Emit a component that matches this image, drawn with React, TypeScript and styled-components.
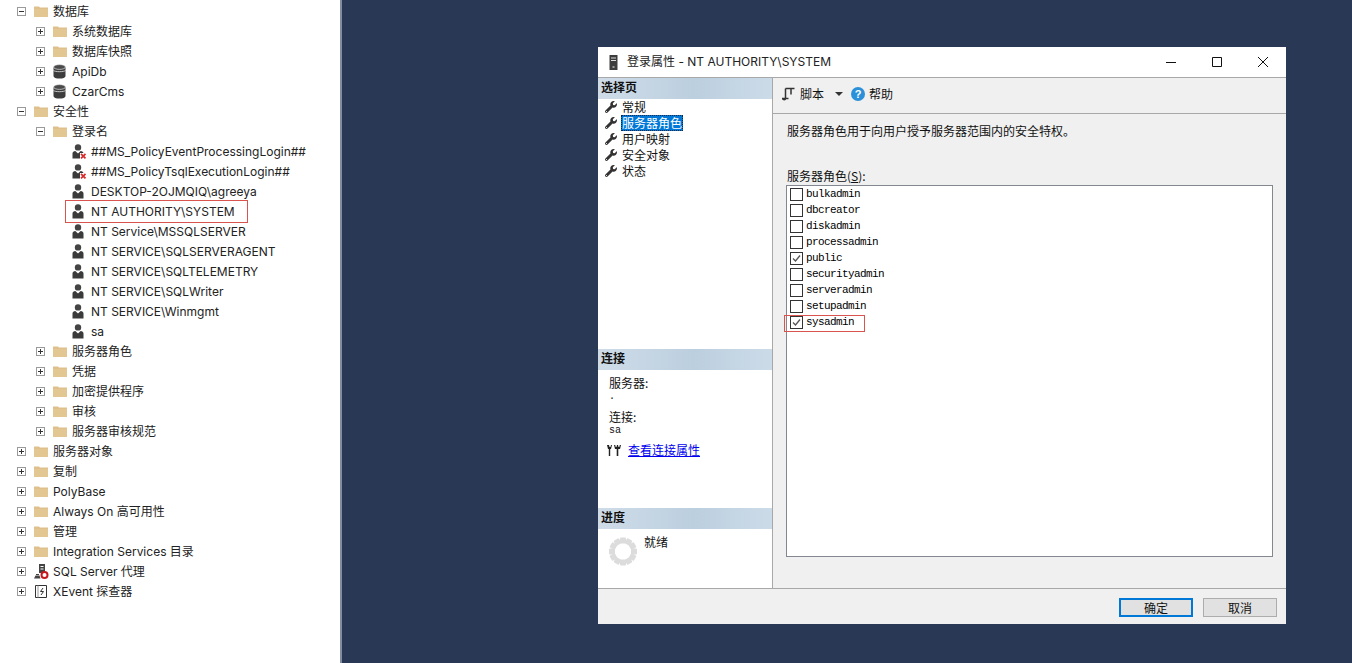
import React from "react";
import styled, { createGlobalStyle } from "styled-components";
import { FaWrench } from "react-icons/fa";

const UI_FONT = `Inter, "Noto Sans CJK SC", sans-serif`;
const DLG_FONT = `"Noto Sans CJK SC", "Liberation Sans", sans-serif`;
const MONO_FONT = `"Liberation Mono", "DejaVu Sans Mono", monospace`;

type Kind = "folder" | "db" | "user" | "userx" | "agent" | "xevent";
type Node = { level: number; text: string; kind: Kind; exp?: "+" | "-"; marked?: boolean };

const nodes: Node[] = [
  { level: 0, text: "数据库", kind: "folder", exp: "-" },
  { level: 1, text: "系统数据库", kind: "folder", exp: "+" },
  { level: 1, text: "数据库快照", kind: "folder", exp: "+" },
  { level: 1, text: "ApiDb", kind: "db", exp: "+" },
  { level: 1, text: "CzarCms", kind: "db", exp: "+" },
  { level: 0, text: "安全性", kind: "folder", exp: "-" },
  { level: 1, text: "登录名", kind: "folder", exp: "-" },
  { level: 2, text: "##MS_PolicyEventProcessingLogin##", kind: "userx" },
  { level: 2, text: "##MS_PolicyTsqlExecutionLogin##", kind: "userx" },
  { level: 2, text: "DESKTOP-2OJMQIQ\\agreeya", kind: "user" },
  { level: 2, text: "NT AUTHORITY\\SYSTEM", kind: "user", marked: true },
  { level: 2, text: "NT Service\\MSSQLSERVER", kind: "user" },
  { level: 2, text: "NT SERVICE\\SQLSERVERAGENT", kind: "user" },
  { level: 2, text: "NT SERVICE\\SQLTELEMETRY", kind: "user" },
  { level: 2, text: "NT SERVICE\\SQLWriter", kind: "user" },
  { level: 2, text: "NT SERVICE\\Winmgmt", kind: "user" },
  { level: 2, text: "sa", kind: "user" },
  { level: 1, text: "服务器角色", kind: "folder", exp: "+" },
  { level: 1, text: "凭据", kind: "folder", exp: "+" },
  { level: 1, text: "加密提供程序", kind: "folder", exp: "+" },
  { level: 1, text: "审核", kind: "folder", exp: "+" },
  { level: 1, text: "服务器审核规范", kind: "folder", exp: "+" },
  { level: 0, text: "服务器对象", kind: "folder", exp: "+" },
  { level: 0, text: "复制", kind: "folder", exp: "+" },
  { level: 0, text: "PolyBase", kind: "folder", exp: "+" },
  { level: 0, text: "Always On 高可用性", kind: "folder", exp: "+" },
  { level: 0, text: "管理", kind: "folder", exp: "+" },
  { level: 0, text: "Integration Services 目录", kind: "folder", exp: "+" },
  { level: 0, text: "SQL Server 代理", kind: "agent", exp: "+" },
  { level: 0, text: "XEvent 探查器", kind: "xevent", exp: "+" },
];

const pages = ["常规", "服务器角色", "用户映射", "安全对象", "状态"];

const roles = [
  { name: "bulkadmin" },
  { name: "dbcreator" },
  { name: "diskadmin" },
  { name: "processadmin" },
  { name: "public", on: true },
  { name: "securityadmin" },
  { name: "serveradmin" },
  { name: "setupadmin" },
  { name: "sysadmin", on: true, marked: true },
];

function TreeIcon({ kind }: { kind: Kind }) {
  if (kind === "folder")
    return (
      <svg width="15" height="14" viewBox="0 0 15 14">
        <path d="M0 2.500h5l1 1h8v9.500H0z" fill="#dfc08c" />
        <path d="M0 5h14v8H0z" fill="#e3c793" />
      </svg>
    );
  if (kind === "db")
    return (
      <svg width="13" height="15" viewBox="0 0 13 15">
        <path d="M.5 3v9c0 1.600 2.700 2.600 6 2.600s6-1 6-2.600V3z" fill="#3c3c3c" />
        <ellipse cx="6.500" cy="3" rx="6" ry="2.400" fill="#4a4a4a" stroke="#fff" strokeWidth=".6" />
        <path d="M.5 6.400c1.200 1.700 10.800 1.700 12 0" fill="none" stroke="#fff" strokeWidth=".7" />
      </svg>
    );
  if (kind === "user" || kind === "userx")
    return (
      <svg width="15" height="15" viewBox="0 0 15 15">
        <circle cx="6" cy="3.400" r="3.200" fill="#444" />
        <path d="M.5 14.500V9.500c0-1.500 1.300-2.400 2.800-2.600L6 9.500l2.700-2.600c1.500.2 2.800 1.100 2.800 2.600v5z" fill="#3a3a3a" />
        {kind === "userx" && (
          <>
            <path d="M8 9h7v6H8z" fill="#fff" />
            <path d="M9 9.800l4.500 4.600M13.500 9.800L9 14.400" stroke="#d62b2b" strokeWidth="1.700" />
          </>
        )}
      </svg>
    );
  if (kind === "agent")
    return (
      <svg width="15" height="15" viewBox="0 0 15 15">
        <path d="M5 0h6v9H5z" fill="#444" />
        <path d="M6.500 2h3v1h-3zM6.500 4.500h3v1h-3z" fill="#fff" />
        <path d="M0 14.500l1.500-3h4l1 3zM2 11h3v-1H2z" fill="#444" />
        <circle cx="10.500" cy="11" r="3" fill="#fff" stroke="#c8161d" strokeWidth="2" />
      </svg>
    );
  return (
    <svg width="14" height="15" viewBox="0 0 14 15">
      <path d="M1.500 1.500h11v12h-11z" fill="#fff" stroke="#333" />
      <path d="M4 1.500v12" stroke="#999" />
      <path d="M9 4L6.500 7.500h3L7 11" fill="none" stroke="#333" />
    </svg>
  );
}

function TreeRow({ node }: { node: Node }) {
  return (
    <Row $level={node.level} $marked={node.marked}>
      <ExpanderSlot>
        {node.exp && (
          <Expander>
            <svg width="9" height="9" viewBox="0 0 9 9">
              <path d={node.exp === "+" ? "M2 4.500h5M4.500 2v5" : "M2 4.500h5"} stroke="#333" />
            </svg>
          </Expander>
        )}
      </ExpanderSlot>
      <IconSlot>
        <TreeIcon kind={node.kind} />
      </IconSlot>
      <RowText>{node.text}</RowText>
    </Row>
  );
}

function Spinner() {
  const dots = Array.from({ length: 12 }, (_, i) => (i * 360) / 12);
  return (
    <svg width="30" height="31" viewBox="0 0 30 31">
      {dots.map((a) => (
        <rect key={a} x="12" y="1.500" width="6" height="6" rx="1" fill="#dcdcdc" transform={`rotate(${a} 15 15.500)`} />
      ))}
    </svg>
  );
}

export default function App() {
  return (
    <>
      <Global />
      <Page>
        <TreePanel>
          {nodes.map((n) => (
            <TreeRow key={n.text} node={n} />
          ))}
        </TreePanel>
        <Desktop>
          <Dialog>
            <TitleBar>
              <svg width="9" height="15" viewBox="0 0 9 15">
                <path d="M.5 0h8v15h-8z" fill="#3c3c3c" />
                <path d="M2 2.500h5v1H2zM2 5h5v1H2z" fill="#ddd" />
                <path d="M3.500 11h2v2h-2z" fill="#999" />
              </svg>
              <TitleText>登录属性 - NT AUTHORITY\SYSTEM</TitleText>
              <WinButton>
                <svg width="12" height="12" viewBox="0 0 12 12">
                  <path d="M1 6.500h10" stroke="#111" />
                </svg>
              </WinButton>
              <WinButton>
                <svg width="12" height="12" viewBox="0 0 12 12">
                  <path d="M1.500 1.500h9v9h-9z" fill="none" stroke="#111" />
                </svg>
              </WinButton>
              <WinButton>
                <svg width="12" height="12" viewBox="0 0 12 12">
                  <path d="M1 1l10 10M11 1L1 11" stroke="#111" />
                </svg>
              </WinButton>
            </TitleBar>
            <Body>
              <Sidebar>
                <Section>
                  <SectionHead>选择页</SectionHead>
                  <PageList>
                    {pages.map((p) => (
                      <PageItem key={p}>
                        <FaWrench size={12} color="#333" />
                        <PageLabel $active={p === "服务器角色"}>{p}</PageLabel>
                      </PageItem>
                    ))}
                  </PageList>
                </Section>
                <Section>
                  <SectionHead>连接</SectionHead>
                  <ConnBlock>
                    <ConnLabel>服务器:</ConnLabel>
                    <ConnValue>.</ConnValue>
                    <ConnLabel $top={6}>连接:</ConnLabel>
                    <ConnValue>sa</ConnValue>
                    <LinkRow>
                      <svg width="15" height="13" viewBox="0 0 15 13">
                        <path d="M0 1l1 4h3l1-4H4L3.500 3h-1L2 1zM1.800 5h1.400v7H1.800z" fill="#222" />
                        <path d="M7 1l1 4h5l1-4h-1.200l-.5 2h-.8l-.5-2h-1l-.5 2h-.8L8.200 1zM9.700 5h1.600v7H9.700z" fill="#222" />
                      </svg>
                      <PropLink>查看连接属性</PropLink>
                    </LinkRow>
                  </ConnBlock>
                </Section>
                <Section>
                  <SectionHead>进度</SectionHead>
                  <ProgressRow>
                    <Spinner />
                    <ProgressText>就绪</ProgressText>
                  </ProgressRow>
                </Section>
              </Sidebar>
              <Main>
                <Toolbar>
                  <svg width="13" height="14" viewBox="0 0 13 14">
                    <path d="M3.500 1.500h9M3.500 1.500v10c0 1.500-2.500 1.500-3 0h6M9 1.500v6" fill="none" stroke="#333" strokeWidth="1.500" />
                  </svg>
                  <ToolLabel>脚本</ToolLabel>
                  <Caret />
                  <HelpIcon>?</HelpIcon>
                  <HelpLabel>帮助</HelpLabel>
                </Toolbar>
                <Content>
                  <Description>服务器角色用于向用户授予服务器范围内的安全特权。</Description>
                  <ListLabel>
                    服务器角色(<u>S</u>):
                  </ListLabel>
                  <RoleList>
                    {roles.map((r) => (
                      <RoleRow key={r.name} $marked={r.marked}>
                        <CheckBox>
                          {r.on && (
                            <svg width="11" height="11" viewBox="0 0 11 11">
                              <path d="M2 5.500l2.500 2.500L9 2.500" fill="none" stroke="#555" strokeWidth="1.300" />
                            </svg>
                          )}
                        </CheckBox>
                        <RoleName>{r.name}</RoleName>
                      </RoleRow>
                    ))}
                  </RoleList>
                </Content>
              </Main>
            </Body>
            <Footer>
              <DlgButton $primary>确定</DlgButton>
              <DlgButton>取消</DlgButton>
            </Footer>
          </Dialog>
        </Desktop>
      </Page>
    </>
  );
}

const Global = createGlobalStyle`
  html, body { margin: 0; padding: 0; background: #fff; overflow: hidden; }
`;

const Page = styled.div`
  display: flex;
  width: 1352px;
  height: 663px;
  overflow: hidden;
`;

const TreePanel = styled.div`
  width: 340px;
  flex: none;
  padding-top: 1px;
  background: #fff;
  font-family: ${UI_FONT};
  font-size: 12px;
  color: #222;
`;

const Row = styled.div<{ $level: number; $marked?: boolean }>`
  position: relative;
  display: flex;
  align-items: center;
  height: 20px;
  padding-left: ${(p) => 17 + p.$level * 19}px;

  ${(p) =>
    p.$marked &&
    `&::after {
      content: "";
      position: absolute;
      left: 65px;
      top: -1px;
      width: 181px;
      height: 21px;
      border: 1px solid #d9534f;
    }`}
`;

const ExpanderSlot = styled.span`
  display: flex;
  width: 17px;
  flex: none;
`;

const Expander = styled.span`
  display: flex;
  width: 9px;
  height: 9px;
  border: 1px solid #9a9a9a;
  box-sizing: border-box;
  align-items: center;
  justify-content: center;

  svg {
    flex: none;
  }
`;

const IconSlot = styled.span`
  display: flex;
  width: 19px;
  flex: none;
`;

const RowText = styled.span`
  white-space: nowrap;
  line-height: 20px;
  margin-top: 2px;
`;

const Desktop = styled.div`
  flex: 1;
  border-left: 2px solid #838da0;
  background: #293955;
  padding: 47px 0 0 256px;
`;

const Dialog = styled.div`
  display: flex;
  flex-direction: column;
  width: 688px;
  height: 577px;
  background: #f0f0f0;
  font-family: ${DLG_FONT};
  font-size: 12px;
  color: #111;
`;

const TitleBar = styled.div`
  display: flex;
  align-items: center;
  height: 30px;
  flex: none;
  padding-left: 11px;
  background: #fff;
  border-bottom: 1px solid #a8a8a8;
`;

const TitleText = styled.span`
  flex: 1;
  margin-left: 9px;
  margin-top: -3px;
  font-family: ${UI_FONT};
  color: #222;
`;

const WinButton = styled.span`
  display: flex;
  width: 46px;
  height: 30px;
  align-items: center;
  justify-content: center;
`;

const Body = styled.div`
  flex: 1;
  display: flex;
  min-height: 0;
  border-bottom: 1px solid #a8a8a8;
`;

const Sidebar = styled.div`
  display: grid;
  grid-template-rows: 271px 159px 1fr;
  width: 174px;
  flex: none;
  background: #fff;
  border-right: 1px solid #a8a8a8;
`;

const Section = styled.div`
  display: flex;
  flex-direction: column;
`;

const SectionHead = styled.div`
  display: flex;
  align-items: center;
  height: 21px;
  box-sizing: border-box;
  flex: none;
  padding: 0 0 5px 3px;
  font-weight: 700;
  background: linear-gradient(90deg, #cfdce8 0%, #bccfdf 55%, #ccdbe8 100%);
`;

const PageList = styled.div`
  display: flex;
  flex-direction: column;
  padding: 0 0 0 7px;
`;

const PageItem = styled.div`
  display: flex;
  align-items: center;
  gap: 4px;
  height: 16px;
`;

const PageLabel = styled.span<{ $active?: boolean }>`
  padding: 0 1px;
  line-height: 16px;
  ${(p) => p.$active && `background: #0078d7; color: #fff; outline: 1px dotted #0b2a4a; outline-offset: -1px;`}
`;

const ConnBlock = styled.div`
  display: flex;
  flex-direction: column;
  padding: 4px 0 0 11px;
`;

const ConnLabel = styled.div<{ $top?: number }>`
  line-height: 17px;
  margin-top: ${(p) => p.$top ?? 0}px;
`;

const ConnValue = styled.div`
  font-family: ${MONO_FONT};
  font-size: 10px;
  line-height: 11px;
  height: 11px;
`;

const LinkRow = styled.div`
  display: flex;
  align-items: center;
  gap: 6px;
  margin: 6px 0 0 -2px;
`;

const PropLink = styled.a`
  color: #0000ee;
  text-decoration: underline;
  line-height: 16px;
`;

const ProgressRow = styled.div`
  display: flex;
  gap: 6px;
  padding: 7px 0 0 10px;
`;

const ProgressText = styled.span`
  line-height: 12px;
`;

const Main = styled.div`
  flex: 1;
  display: flex;
  flex-direction: column;
  min-width: 0;
`;

const Toolbar = styled.div`
  display: flex;
  align-items: center;
  height: 36px;
  flex: none;
  padding: 0 0 4px 9px;
  border-bottom: 1px solid #a8a8a8;
  box-sizing: border-box;
`;

const ToolLabel = styled.span`
  margin-left: 5px;
`;

const Caret = styled.span`
  width: 0;
  height: 0;
  margin-left: 11px;
  border-left: 4px solid transparent;
  border-right: 4px solid transparent;
  border-top: 4px solid #333;
`;

const HelpIcon = styled.span`
  display: flex;
  width: 14px;
  height: 14px;
  margin-left: 8px;
  align-items: center;
  justify-content: center;
  border-radius: 50%;
  background: #2b90d9;
  color: #fff;
  font: 700 11px "Liberation Sans", sans-serif;
`;

const HelpLabel = styled.span`
  margin-left: 4px;
`;

const Content = styled.div`
  flex: 1;
  display: flex;
  flex-direction: column;
  min-height: 0;
  padding: 9px 13px 31px 13px;
`;

const Description = styled.div`
  margin-left: 1px;
  line-height: 16px;
`;

const ListLabel = styled.div`
  margin: 29px 0 0 1px;
  line-height: 16px;
  height: 16px;

  u {
    text-underline-offset: 1px;
  }
`;

const RoleList = styled.div`
  flex: 1;
  display: flex;
  flex-direction: column;
  margin-top: 1px;
  background: #fff;
  border: 1px solid #828790;
`;

const RoleRow = styled.div<{ $marked?: boolean }>`
  position: relative;
  display: flex;
  align-items: center;
  gap: 3px;
  height: 16px;
  padding-left: 3px;

  ${(p) =>
    p.$marked &&
    `&::after {
      content: "";
      position: absolute;
      left: -3px;
      top: 1px;
      width: 79px;
      height: 15px;
      border: 1px solid #d9534f;
    }`}
`;

const RoleName = styled.span`
  font-family: ${MONO_FONT};
  font-size: 11px;
  letter-spacing: -0.6px;
  color: #000;
`;

const CheckBox = styled.span`
  display: flex;
  width: 13px;
  height: 13px;
  box-sizing: border-box;
  align-items: center;
  justify-content: center;
  border: 1px solid #333;
  background: #fff;
`;

const Footer = styled.div`
  display: flex;
  justify-content: flex-end;
  gap: 10px;
  height: 35px;
  flex: none;
  box-sizing: border-box;
  padding: 9px 9px 0 0;
`;

const DlgButton = styled.span<{ $primary?: boolean }>`
  display: flex;
  width: 74px;
  height: 19px;
  box-sizing: border-box;
  align-items: center;
  justify-content: center;
  background: #e1e1e1;
  border: ${(p) => (p.$primary ? "2px solid #0078d7" : "1px solid #adadad")};
`;
